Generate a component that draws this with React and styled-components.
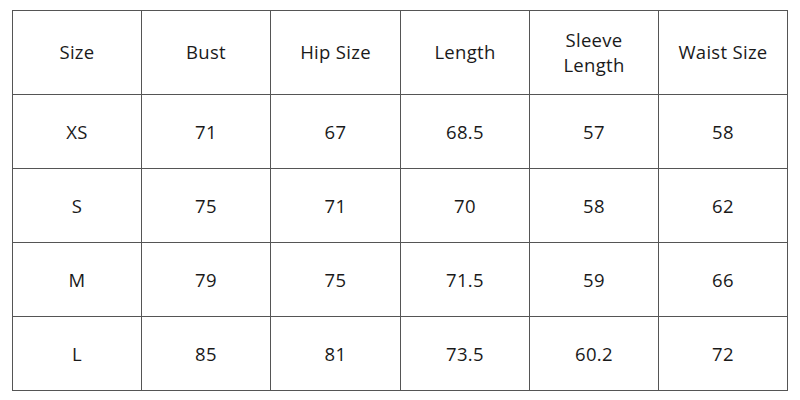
import React from "react";
import styled, { createGlobalStyle } from "styled-components";

const Global = createGlobalStyle`
  html, body { margin: 0; padding: 0; background: #fff; }
  body { font-family: "Open Sans", "Noto Sans", sans-serif; }
`;

const Page = styled.div`
  width: 800px;
  height: 400px;
  padding: 10px 0 0 12px;
  box-sizing: border-box;
`;

const Grid = styled.div`
  display: grid;
  grid-template-columns: 129px 129px 130px 129px 129px 129px;
  grid-template-rows: 84px repeat(4, 74px);
  border-left: 1px solid #555;
  border-top: 1px solid #555;
  width: max-content;
`;

const Cell = styled.div`
  border-right: 1px solid #555;
  border-bottom: 1px solid #555;
  display: flex;
  align-items: center;
  justify-content: center;
  text-align: center;
  font-size: 18.5px;
  letter-spacing: 0.3px;
  line-height: 25px;
  color: #1a1a1a;
  box-sizing: border-box;
  padding-bottom: ${(p) => (p.$head ? "2px" : "1px")};
`;

const head = ["Size", "Bust", "Hip Size", "Length", "Sleeve\nLength", "Waist Size"];
const rows = [
  ["XS", "71", "67", "68.5", "57", "58"],
  ["S", "75", "71", "70", "58", "62"],
  ["M", "79", "75", "71.5", "59", "66"],
  ["L", "85", "81", "73.5", "60.2", "72"],
];

export default function App() {
  return (
    <Page>
      <Global />
      <Grid>
        {head.map((h) => (
          <Cell $head key={h}>
            <span>
              {h.split("\n").map((l, i) => (
                <React.Fragment key={i}>
                  {i > 0 && <br />}
                  {l}
                </React.Fragment>
              ))}
            </span>
          </Cell>
        ))}
        {rows.map((r, ri) =>
          r.map((v, ci) => <Cell key={ri + "-" + ci}>{v}</Cell>)
        )}
      </Grid>
    </Page>
  );
}
